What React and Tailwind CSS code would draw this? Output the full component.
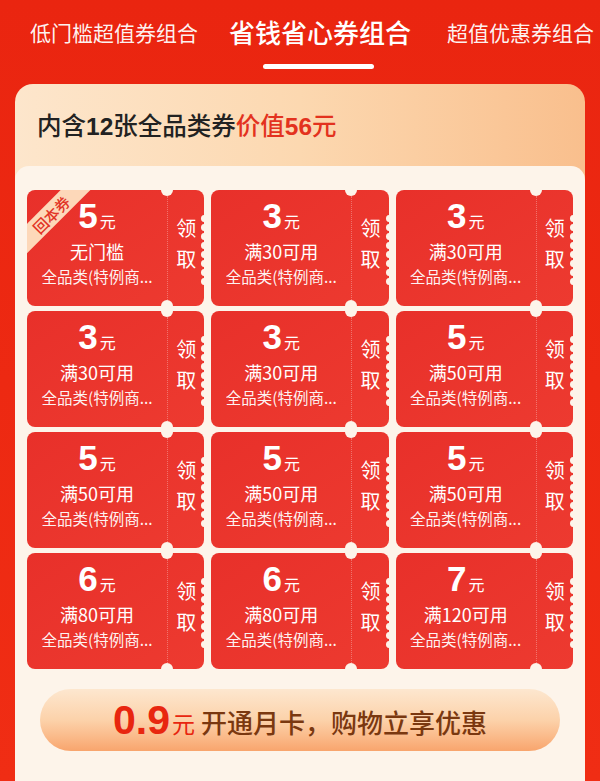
import React from 'react';

const cjk = { fontFamily: '"Noto Sans CJK SC", "Noto Sans", sans-serif' };
const num = { fontFamily: '"Liberation Sans", "Noto Sans CJK SC", sans-serif' };

const coupons = [
  { amount: 5, rule: '无门槛', badge: true },
  { amount: 3, rule: '满30可用' },
  { amount: 3, rule: '满30可用' },
  { amount: 3, rule: '满30可用' },
  { amount: 3, rule: '满30可用' },
  { amount: 5, rule: '满50可用' },
  { amount: 5, rule: '满50可用' },
  { amount: 5, rule: '满50可用' },
  { amount: 5, rule: '满50可用' },
  { amount: 6, rule: '满80可用' },
  { amount: 6, rule: '满80可用' },
  { amount: 7, rule: '满120可用' },
];

const scallops = [25, 34, 43, 52, 61, 70, 79, 88];

const Coupon = ({ amount, rule, badge }) => (
  <div className="relative h-[116px] rounded-[8px] bg-gradient-to-br from-[#e8302a] to-[#ed3a30] flex overflow-hidden">
    {badge && (
      <div className="absolute left-[-26px] top-[14px] w-[100px] h-[21px] -rotate-45 bg-[#fdd8b9] flex items-center justify-center">
        <span className="text-[15px] leading-none text-[#e23426] font-medium" style={cjk}>回本券</span>
      </div>
    )}
    <div className="w-[140px] flex flex-col items-center text-white pt-[8px]">
      <div className="flex items-baseline h-[38px]">
        <span className="text-[35px] font-bold leading-none" style={num}>{amount}</span>
        <span className="text-[16px] ml-[2px]" style={cjk}>元</span>
      </div>
      <div className="text-[18px] leading-[26px] mt-[2px]" style={cjk}>{rule}</div>
      <div className="text-[15.5px] leading-[24px] text-white/95" style={cjk}>全品类(特例商...</div>
    </div>
    <div className="w-0 border-l border-dotted border-white/30 my-[6px]" />
    <div className="flex-1 flex flex-col items-center justify-center text-white text-[20px] leading-[31px] pb-[10px]" style={cjk}>
      <span>领</span>
      <span>取</span>
    </div>
    <span className="absolute left-[134px] top-[-6px] w-[12px] h-[12px] rounded-full bg-[#fdf4ea]" />
    <span className="absolute left-[134px] bottom-[-6px] w-[12px] h-[12px] rounded-full bg-[#fdf4ea]" />
    {scallops.map((t) => (
      <span key={t} className="absolute right-[-4px] w-[7px] h-[7px] rounded-full bg-[#fdf4ea]" style={{ top: t }} />
    ))}
  </div>
);

export default function App() {
  return (
    <div className="w-[600px] h-[781px] overflow-hidden bg-gradient-to-b from-[#ea2510] to-[#f02d14]" style={cjk}>
      <div className="h-[84px] relative">
        <div className="flex items-center pl-[30px] pt-[15px] text-white">
          <span className="text-[21px] leading-[32px] text-white/95">低门槛超值券组合</span>
          <span className="ml-[31px] text-[26px] leading-[34px] font-medium">省钱省心券组合</span>
          <span className="ml-[36px] text-[21px] leading-[32px] text-white/95">超值优惠券组合</span>
        </div>
        <div className="absolute left-[263px] top-[64px] w-[111px] h-[5px] rounded-full bg-white" />
      </div>

      <div className="mx-[15px] rounded-t-[18px] bg-gradient-to-r from-[#fde6cc] via-[#fcd8b0] to-[#f9bf8d] overflow-hidden">
        <div className="h-[82px] flex items-center pl-[22px] pt-[2px]">
          <span className="text-[24.5px] font-medium text-[#222]">
            内含<span style={num} className="font-bold">12</span>张全品类券
            <span className="text-[#e3321e]">价值<span style={num} className="font-bold">56</span>元</span>
          </span>
        </div>
        <div className="rounded-t-[14px] bg-[#fdf4ea] px-[12px] pt-[24px] pb-[40px]">
          <div className="grid grid-cols-3 gap-x-[7px] gap-y-[5px]">
            {coupons.map((c, i) => (
              <Coupon key={i} {...c} />
            ))}
          </div>
          <div className="mt-[20px] mx-[13px] h-[62px] rounded-full bg-gradient-to-b from-[#fde7cf] via-[#fcd2aa] to-[#f8a56d] flex items-center justify-center">
            <span className="text-[41px] font-bold text-[#e8260f] leading-none" style={num}>0.9</span>
            <span className="text-[23px] text-[#e8260f] ml-[2px] mt-[6px]">元</span>
            <span className="text-[26px] text-[#7a3810] ml-[6px] font-medium mt-[2px]">开通月卡，购物立享优惠</span>
          </div>
        </div>
      </div>
    </div>
  );
}
